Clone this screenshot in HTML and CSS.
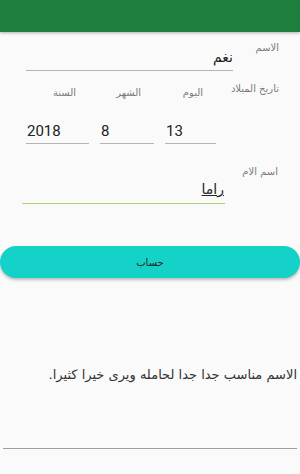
FILE: index.html
```
<!doctype html>
<html dir="rtl" lang="ar">

<head>
    <meta charset="UTF-8">
    <title>الاسم</title>
    <link rel="stylesheet" href="styles.css">
</head>

<body>
    <div class="appbar"></div>
    <div class="form">
        <div class="name-row">
            <div class="label">الاسم</div>
            <div class="field">نغم</div>
        </div>
        <div class="date-grid">
            <div class="label date-title">تاريخ الميلاد</div>
            <div class="label sub">اليوم</div>
            <div class="label sub">الشهر</div>
            <div class="label sub">السنة</div>
            <div></div>
            <div class="field num">13</div>
            <div class="field num">8</div>
            <div class="field num">2018</div>
        </div>
        <div class="mother-row">
            <div class="label">اسم الام</div>
            <div class="field focused"><span class="typing">راما</span></div>
        </div>
    </div>
    <button class="calc">حساب</button>
    <p class="result">الاسم مناسب جدا جدا لحامله ويرى خيرا كثيرا.</p>
    <div class="bottom-line"></div>
</body>

</html>
```
FILE: styles.css
```
* {
    margin: 0;
    padding: 0;
    box-sizing: border-box;
}

html,
body {
    width: 100%;
    height: 100%;
    overflow: hidden;
}

body {
    background-color: #fafafa;
    font-family: "DejaVu Sans", sans-serif;
    color: #222;
}

.appbar {
    height: 32px;
    background-color: #1e7f3d;
    box-shadow: 0 1px 3px rgba(0, 0, 0, 0.3);
}

.label {
    font-size: 10px;
    line-height: 14px;
    color: #7a7a7a;
}

.field {
    border-bottom: 1px solid #b4b4b4;
    font-size: 14px;
    line-height: 20px;
    padding-bottom: 3px;
}

.name-row {
    display: flex;
    padding: 9px 21px 0 26px;
}

.name-row .label {
    width: 23px;
    margin-left: 23px;
    white-space: nowrap;
}

.name-row .field {
    flex: 1;
    margin-top: 6px;
}

.date-grid {
    display: grid;
    grid-template-columns: 52px 51px 54px 63px;
    column-gap: 11px;
    padding: 11px 21px 0 26px;
}

.date-title {
    white-space: nowrap;
}

.sub {
    margin-top: 4px;
    padding-right: 13px;
}

.num {
    direction: ltr;
    text-align: left;
    font-family: Roboto, sans-serif;
    font-size: 15px;
    margin-top: 21px;
    padding-bottom: 2px;
    padding-left: 1px;
}

.mother-row {
    display: flex;
    padding: 21px 22px 0 22px;
}

.mother-row .label {
    width: 33px;
    margin-left: 20px;
    white-space: nowrap;
}

.mother-row .field {
    flex: 1;
    margin-top: 14px;
    padding-bottom: 4px;
}

.mother-row .focused {
    border-bottom: 1px solid #a9d46f;
    padding-right: 1px;
}

.typing {
    text-decoration: underline;
}

.calc {
    display: block;
    width: 100%;
    height: 32px;
    margin-top: 42px;
    border: none;
    border-radius: 16px;
    background-color: #15d2c9;
    box-shadow: 0 2px 3px rgba(0, 0, 0, 0.25);
    font-family: "DejaVu Sans", sans-serif;
    font-size: 10px;
    color: #222;
}

.result {
    margin-top: 88px;
    padding-right: 3px;
    font-size: 13px;
    line-height: 18px;
    color: #333;
}

.bottom-line {
    height: 1px;
    margin: 64px 3px 0;
    background-color: #9e9e9e;
}
```
